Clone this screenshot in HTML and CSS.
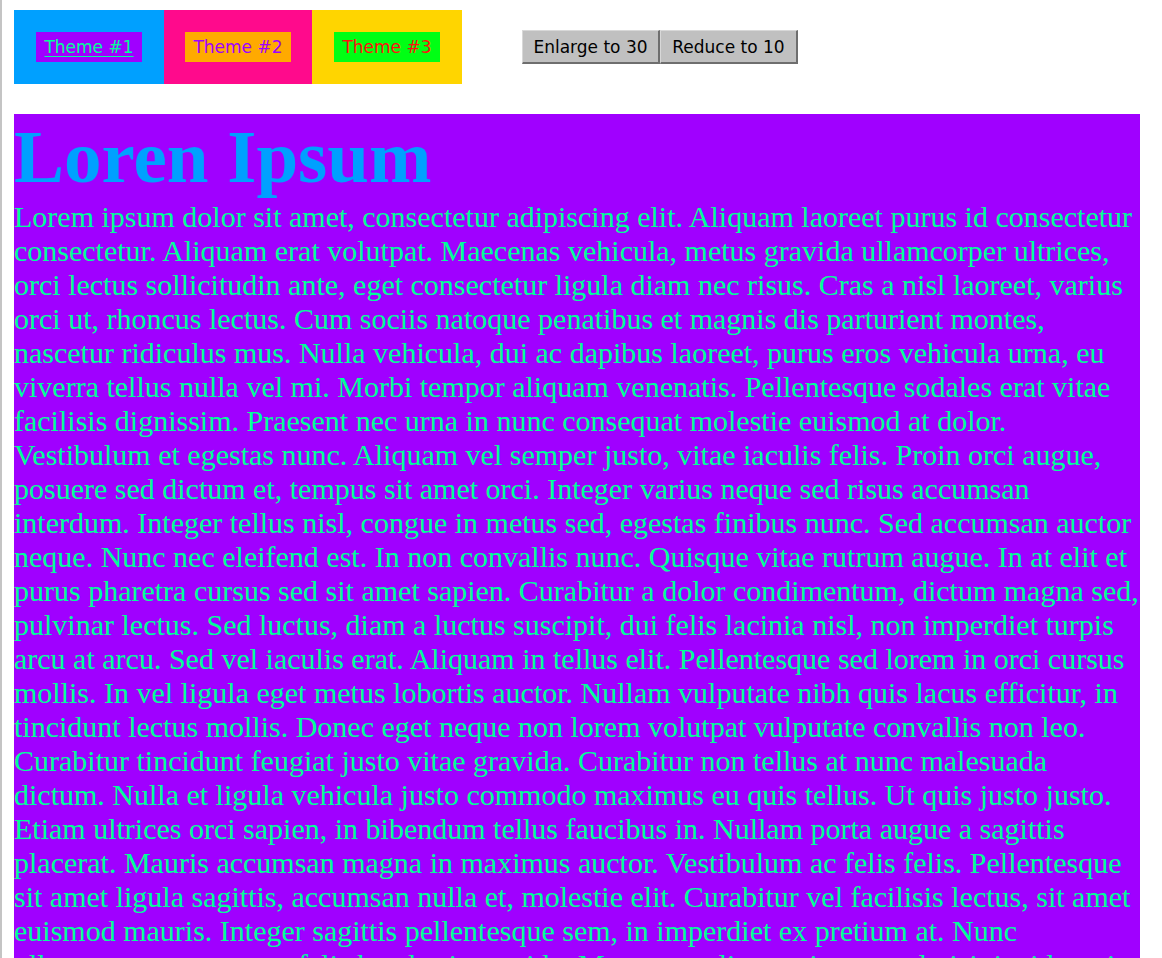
FILE: index.html
```html
<!DOCTYPE html>
<html>
<head>
<meta charset="utf-8">
<title>Loren Ipsum</title>
<link rel="stylesheet" href="styles.css">
</head>
<body>
<header class="toolbar">
  <nav class="themes">
    <div class="theme theme-1"><a href="#" class="theme-link">Theme #1</a></div>
    <div class="theme theme-2"><a href="#" class="theme-link">Theme #2</a></div>
    <div class="theme theme-3"><a href="#" class="theme-link">Theme #3</a></div>
  </nav>
  <div class="sizes">
    <button class="size-btn">Enlarge to 30</button><button class="size-btn">Reduce to 10</button>
  </div>
</header>
<main class="content">
  <h1 class="title">Loren Ipsum</h1>
  <p class="text">Lorem ipsum dolor sit amet, consectetur adipiscing elit. Aliquam laoreet purus id consectetur consectetur. Aliquam erat volutpat. Maecenas vehicula, metus gravida ullamcorper ultrices, orci lectus sollicitudin ante, eget consectetur ligula diam nec risus. Cras a nisl laoreet, varius orci ut, rhoncus lectus. Cum sociis natoque penatibus et magnis dis parturient montes, nascetur ridiculus mus. Nulla vehicula, dui ac dapibus laoreet, purus eros vehicula urna, eu viverra tellus nulla vel mi. Morbi tempor aliquam venenatis. Pellentesque sodales erat vitae facilisis dignissim. Praesent nec urna in nunc consequat molestie euismod at dolor. Vestibulum et egestas nunc. Aliquam vel semper justo, vitae iaculis felis. Proin orci augue, posuere sed dictum et, tempus sit amet orci. Integer varius neque sed risus accumsan interdum. Integer tellus nisl, congue in metus sed, egestas finibus nunc. Sed accumsan auctor neque. Nunc nec eleifend est. In non convallis nunc. Quisque vitae rutrum augue. In at elit et purus pharetra cursus sed sit amet sapien. Curabitur a dolor condimentum, dictum magna sed, pulvinar lectus. Sed luctus, diam a luctus suscipit, dui felis lacinia nisl, non imperdiet turpis arcu at arcu. Sed vel iaculis erat. Aliquam in tellus elit. Pellentesque sed lorem in orci cursus mollis. In vel ligula eget metus lobortis auctor. Nullam vulputate nibh quis lacus efficitur, in tincidunt lectus mollis. Donec eget neque non lorem volutpat vulputate convallis non leo. Curabitur tincidunt feugiat justo vitae gravida. Curabitur non tellus at nunc malesuada dictum. Nulla et ligula vehicula justo commodo maximus eu quis tellus. Ut quis justo justo. Etiam ultrices orci sapien, in bibendum tellus faucibus in. Nullam porta augue a sagittis placerat. Mauris accumsan magna in maximus auctor. Vestibulum ac felis felis. Pellentesque sit amet ligula sagittis, accumsan nulla et, molestie elit. Curabitur vel facilisis lectus, sit amet euismod mauris. Integer sagittis pellentesque sem, in imperdiet ex pretium at. Nunc ullamcorper quam eget felis hendrerit gravida. Maecenas aliquam ipsum vel nisi tincidunt, in aliquet nibh luctus. Vivamus eget tortor sed nulla tempus pretium.</p>
</main>
</body>
</html>
```
FILE: styles.css
```css
html {
  border-left: 2px solid #c4c4c4;
  background: #ffffff;
}

body {
  margin: 10px 22px 0 12px;
  font-family: "Liberation Serif", "Times New Roman", serif;
}

.toolbar {
  display: flex;
  align-items: center;
  gap: 60px;
  height: 74px;
}

.themes {
  display: flex;
}

.theme {
  display: flex;
  align-items: center;
  justify-content: center;
  width: 150px;
  height: 74px;
}

.theme-2 {
  width: 148px;
}

.theme-1 { background: #00a0ff; }
.theme-2 { background: #ff0a8c; }
.theme-3 { background: #ffd500; }

.theme-link {
  display: block;
  font-family: "DejaVu Sans", Verdana, sans-serif;
  font-size: 17px;
  line-height: 30px;
  padding: 0 8px;
  text-decoration: none;
}

.theme-1 .theme-link {
  background: #a000ff;
  color: #00ff99;
  text-decoration: underline;
  text-underline-offset: 3px;
}

.theme-2 .theme-link {
  background: #ffaa00;
  color: #a000ff;
}

.theme-3 .theme-link {
  background: #00ff14;
  color: #ff1010;
}

.sizes {
  display: flex;
}

.size-btn {
  font-family: "DejaVu Sans", Verdana, sans-serif;
  font-size: 17px;
  color: #000000;
  background: #c0c0c0;
  height: 34px;
  width: 138px;
  padding: 0;
  border-top: 1px solid #d8d8d8;
  border-left: 1px solid #d8d8d8;
  border-right: 2px solid #6e6e6e;
  border-bottom: 2px solid #6e6e6e;
  border-radius: 0;
}

.content {
  margin-top: 30px;
  background: #a000ff;
  color: #00ff99;
}

.title {
  margin: 0;
  font-size: 75px;
  font-weight: bold;
  color: #00a0ff;
  line-height: normal;
}

.text {
  margin: 0;
  font-size: 30px;
  line-height: normal;
}
```
